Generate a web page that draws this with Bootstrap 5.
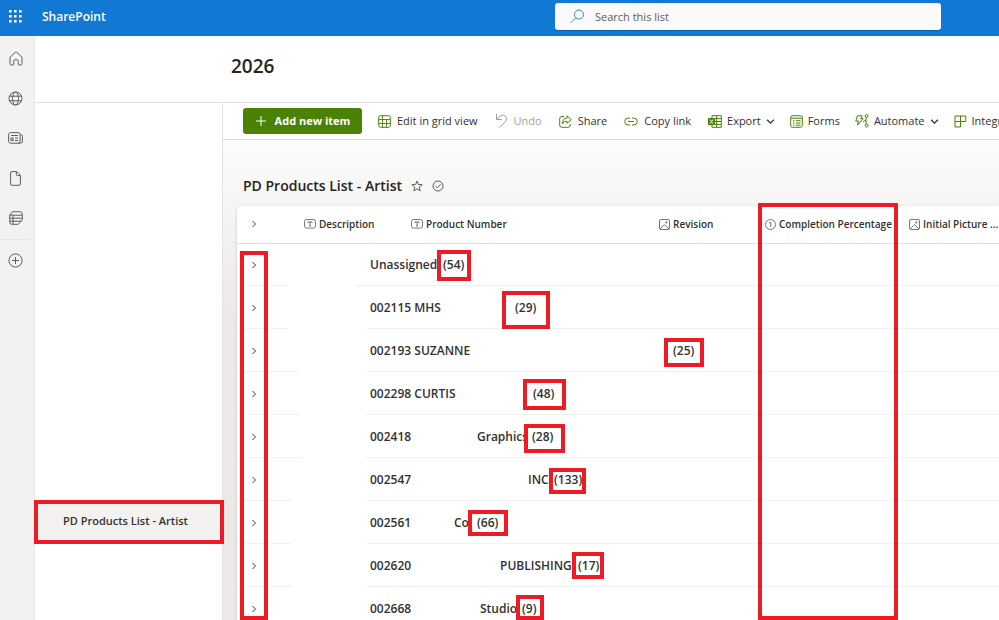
<!DOCTYPE html>
<html lang="en">
<head>
<meta charset="utf-8">
<meta name="viewport" content="width=device-width, initial-scale=1">
<title>PD Products List - Artist</title>
<link href="https://cdn.jsdelivr.net/npm/bootstrap@5.3.0/dist/css/bootstrap.min.css" rel="stylesheet">
<style>
  body { font-family: "Open Sans", "Noto Sans", sans-serif; font-size: 12px; line-height: 16px; color: #323130; background: #fff; }
  svg { fill: none; stroke: currentColor; display: block; flex: none; }
  button { color: inherit; }
  .suite-bar { height: 36px; padding-bottom: 3px; background: #1178d4; }
  .suite-bar .launcher { width: 31px; color: #fff; }
  .suite-bar .launcher svg { fill: #fff; stroke: none; }
  .brand-link { font-size: 12px; font-weight: 600; margin-left: 11px; }
  .search-box { flex: 0 1 386px; height: 27px; margin-right: 58px; background: #fafafa; border-radius: 3px; padding-left: 15px; gap: 10px; color: #3b82c4; box-shadow: 0 1px 1px #0a5ea8; }
  .search-box input { font-size: 11px; color: #605e5c; outline: 0; }
  .search-box input::placeholder { color: #605e5c; }
  .app-rail { flex: 0 0 35px; padding-top: 2px; background: #f3f2f1; color: #605e5c; border-right: 1px solid #eae8e6; }
  .app-rail a { height: 40px; width: 31px; }
  .app-rail .rail-split { border-top: 1px solid #e9e7e5; width: 31px; margin-top: 1px; }
  .site-title { height: 67px; padding: 0 0 6px 196px; border-bottom: 1px solid #e3e1df; }
  .site-title h1 { font-size: 19px; font-weight: 600; line-height: 24px; color: #252423; }
  .site-nav { flex: 0 0 188px; border-right: 1px solid #e6e4e2; padding-top: 399px; }
  .site-nav a { height: 37px; padding-left: 28px; background: #f3f2f1; font-size: 11px; font-weight: 600; }
  .command-bar { height: 37px; padding-left: 20px; gap: 17px; border-bottom: 1px solid #dddbd9; font-size: 11px; }
  .command-bar button { gap: 6px; white-space: nowrap; flex: none; }
  .command-bar .more-commands { gap: 15px; }
  .command-bar .more-commands button { gap: 5px; }
  .command-bar svg { color: #498205; }
  .command-bar .btn-add { height: 26px; width: 119px; gap: 8px; margin-right: -1px; background: #498205; border-radius: 3px; font-weight: 700; }
  .command-bar .btn-add svg, .command-bar .btn-add { color: #fff; }
  .command-bar .caret { color: #323130; stroke-width: 1.4; }
  .command-bar button:disabled, .command-bar button:disabled svg { color: #a19f9d; }
  .list-area { background: linear-gradient(#fcfcfb, #f6f5f4 66px, #eae9e8 180px); }
  .list-head { height: 66px; padding: 36px 0 0 20px; gap: 9px; color: #605e5c; }
  .list-head h2 { font-size: 14px; font-weight: 600; line-height: 20px; color: #252423; }
  .list-card { margin-left: 14px; background: #fff; border-radius: 6px 0 0 0; box-shadow: 0 1px 3px #c4c2c0; }
  .list-card table { table-layout: fixed; width: 100%; min-width: 762px; border-collapse: collapse; }
  .list-card th { height: 37px; padding: 0 0 0 10px; font-size: 10px; font-weight: 600; white-space: nowrap; border-bottom: 1px solid #e1dfdd; }
  .list-card th span { gap: 3px; }
  .list-card th svg { color: #797775; }
  .list-card .expander svg { color: #3b3a39; }
  .list-card td { height: 43px; padding: 0; font-size: 12px; font-weight: 600; }
  .list-card .expander { width: 34px; height: 24px; }
  .col-expand { width: 57px; } .col-desc { width: 107px; } .col-number { width: 248px; }
  .col-rev { width: 106px; } .col-done { width: 144px; }
  .group-row { --from: 55px; --to: 130px; background: linear-gradient(90deg, #f2f1f0 var(--from), #fff var(--from) var(--to), #f2f1f0 var(--to)) bottom / 100% 1px no-repeat; }
  .group-row td:last-child { padding-left: 76px; }
  .group-name { flex: 0 0 var(--name); }
  .group-word { flex: 0 0 var(--word); }
  .g1 { --name: 73px; --from: 51px; --to: 119px; }
  .g2 { --name: 145px; --from: 51px; }
  .g3 { --name: 303px; --from: 61px; }
  .g4 { --name: 163px; --from: 63px; }
  .g5 { --name: 107px; --word: 55px; --from: 65px; }
  .g6 { --name: 158px; --word: 26px; }
  .g7 { --name: 84px; --word: 23px; }
  .g8 { --name: 130px; --word: 78px; }
  .g9 { --name: 110px; --word: 42px; }
  /* review highlights drawn over the page */
  .hl { position: absolute; border: 4px solid #ed1c24; pointer-events: none; }
  .hl-nav { left: 34px; top: 500px; width: 190px; height: 44px; }
  .hl-expand { left: 240px; top: 251px; width: 28px; height: 369px; }
  .hl-done { left: 758px; top: 203px; width: 140px; height: 417px; }
  .hl-1 { left: 437px; top: 250px; width: 34px; height: 31px; }
  .hl-2 { left: 502px; top: 291px; width: 48px; height: 38px; }
  .hl-3 { left: 664px; top: 338px; width: 40px; height: 29px; }
  .hl-4 { left: 523px; top: 379px; width: 43px; height: 31px; }
  .hl-5 { left: 524px; top: 424px; width: 41px; height: 29px; }
  .hl-6 { left: 549px; top: 468px; width: 37px; height: 26px; }
  .hl-7 { left: 468px; top: 510px; width: 40px; height: 26px; }
  .hl-8 { left: 572px; top: 552px; width: 32px; height: 27px; }
  .hl-9 { left: 516px; top: 595px; width: 28px; height: 25px; }
</style>
</head>
<body class="vh-100 overflow-hidden d-flex flex-column position-relative">
<svg class="d-none" aria-hidden="true">
  <symbol id="chev-r" viewBox="0 0 8 8"><path d="M2.500 1l3 3-3 3"/></symbol>
  <symbol id="chev-d" viewBox="0 0 10 10"><path d="M1.200 3l3.800 3.800L8.800 3"/></symbol>
  <symbol id="ic-text" viewBox="0 0 12 10"><rect x=".5" y=".5" width="11" height="8.600" rx="2"/><path d="M4 4V3h4v1M6 3v4M5 7h2"/></symbol>
  <symbol id="ic-image" viewBox="0 0 11 11"><rect x=".5" y=".5" width="10" height="10" rx="1.500"/><path d="M1 10l3.600-3.800q.9-.9 1.800 0L10 10"/><circle cx="7.400" cy="3.400" r=".8"/></symbol>
</svg>

<header class="suite-bar d-flex align-items-center flex-shrink-0">
  <button type="button" class="launcher btn p-0 border-0 d-flex justify-content-center" aria-label="App launcher">
    <svg width="13" height="13" viewBox="0 0 13 13"><path d="M0 0h2.600v2.600H0zM5 0h2.600v2.600H5zM10 0h2.600v2.600H10zM0 5h2.600v2.600H0zM5 5h2.600v2.600H5zM10 5h2.600v2.600H10zM0 10h2.600v2.600H0zM5 10h2.600v2.600H5zM10 10h2.600v2.600H10z"/></svg>
  </button>
  <a href="#" class="brand-link text-white text-decoration-none me-auto">SharePoint</a>
  <div class="search-box d-flex align-items-center">
    <svg width="15" height="15" viewBox="0 0 15 15"><circle cx="9" cy="5.500" r="4.500"/><path d="M5.800 8.800L.8 13.800"/></svg>
    <input type="text" class="border-0 bg-transparent p-0 flex-grow-1" placeholder="Search this list" aria-label="Search this list">
  </div>
</header>

<div class="d-flex flex-grow-1 overflow-hidden">
  <nav class="app-rail" aria-label="App bar">
    <a href="#" class="d-flex align-items-center justify-content-center text-reset" aria-label="Home"><svg width="14" height="15" viewBox="0 0 14 15"><path d="M1 6.200L6.200 1.300q.8-.6 1.600 0L13 6.200v6.600q0 1.200-1.200 1.200h-1.600q-1 0-1-1V10q0-1.400-2.200-1.400T4.800 10v3q0 1-1 1H2.200q-1.200 0-1.200-1.200z"/></svg></a>
    <a href="#" class="d-flex align-items-center justify-content-center text-reset" aria-label="My sites"><svg width="15" height="15" viewBox="0 0 15 15"><circle cx="7.500" cy="7.500" r="6.500"/><ellipse cx="7.500" cy="7.500" rx="3" ry="6.500"/><path d="M1.500 5.200h12M1.500 9.800h12"/></svg></a>
    <a href="#" class="d-flex align-items-center justify-content-center text-reset" aria-label="News"><svg width="15" height="12" viewBox="0 0 15 12"><rect x=".6" y=".6" width="11.500" height="10.600" rx="2"/><path d="M12.200 2.600q2.200 0 2.200 1.600v5q0 2-2.200 2H10M3 3.500h7M7 6h3M7 8.500h3"/><rect x="3" y="6" width="2" height="2.500"/></svg></a>
    <a href="#" class="d-flex align-items-center justify-content-center text-reset" aria-label="My files"><svg width="11" height="15" viewBox="0 0 11 15"><path d="M2 .6h4.800l3.600 3.800V13q0 1.300-1.300 1.300H2Q.6 14.300.6 13V2Q.6.6 2 .6zM6.400.8v2.800q0 1 1 1h2.900"/></svg></a>
    <a href="#" class="d-flex align-items-center justify-content-center text-reset" aria-label="My lists"><svg width="14" height="14" viewBox="0 0 14 14"><path d="M3.500.7h7.300q2.500 0 2.500 2.500v5.500l-4 4.600H3q-2.300 0-2.300-2.300V4.200zM.7 4.200h12.600M.7 7.200h12.600M.7 10.200h11.600M4 4.200v9"/></svg></a>
    <div class="rail-split"></div>
    <a href="#" class="d-flex align-items-center justify-content-center text-reset" aria-label="Create"><svg width="15" height="15" viewBox="0 0 15 15"><circle cx="7.500" cy="7.500" r="6.600"/><path d="M7.500 4v7M4 7.500h7"/></svg></a>
  </nav>

  <div class="d-flex flex-column flex-grow-1 overflow-hidden">
    <div class="site-title d-flex align-items-center flex-shrink-0"><h1 class="m-0">2026</h1></div>
    <div class="d-flex flex-grow-1 overflow-hidden">
      <nav class="site-nav" aria-label="Site">
        <a href="#" class="d-flex align-items-center text-reset text-decoration-none">PD Products List - Artist</a>
      </nav>
      <main class="d-flex flex-column flex-grow-1 overflow-hidden">
        <div class="command-bar d-flex align-items-center flex-shrink-0 overflow-hidden">
          <button type="button" class="btn-add border-0 p-0 d-flex align-items-center justify-content-center"><svg width="12" height="12" viewBox="0 0 12 12"><path d="M6 1v10M1 6h10"/></svg>Add new item</button>
          <button type="button" class="border-0 bg-transparent p-0 d-flex align-items-center"><svg width="13" height="13" viewBox="0 0 13 13"><rect x=".7" y=".7" width="11.600" height="11.600" rx="1.800"/><path d="M.7 4.500h11.600M.7 8.500h11.600M4.500.7v11.600M8.500 4.500v8" stroke-width=".9"/></svg>Edit in grid view</button>
          <button type="button" disabled class="border-0 bg-transparent p-0 d-flex align-items-center"><svg width="13" height="14" viewBox="0 0 13 14"><path d="M1.500 0v5.500H7M1.700 5.200L5 2.200q3-2.400 5.600 0 2.400 2.600 0 5.300L4.500 13.500"/></svg>Undo</button>
          <button type="button" class="border-0 bg-transparent p-0 d-flex align-items-center"><svg width="13" height="13" viewBox="0 0 13 13"><path d="M5 1.500H3Q.7 1.500.7 3.800v6.200q0 2.300 2.300 2.300h6q2.300 0 2.300-2.300V9M8 .8l4.300 3.800L8 8.300V6.300Q5 6 3.300 8.700 3.500 3.500 8 3z"/></svg>Share</button>
          <button type="button" class="border-0 bg-transparent p-0 d-flex align-items-center"><svg width="14" height="9" viewBox="0 0 14 9"><path d="M6 1H4.200Q.7 1 .7 4.500T4.200 8H6M8 1h1.800q3.500 0 3.500 3.500T9.800 8H8M4 4.500h6"/></svg>Copy link</button>
          <div class="more-commands d-flex align-items-center flex-shrink-0">
            <button type="button" class="border-0 bg-transparent p-0 d-flex align-items-center"><svg width="14" height="13" viewBox="0 0 14 13"><path d="M4 3V.7h9.300v11.600H4V10M4 3.600h9.300M7 6.500h6.300M4 9.400h9.300M8.700.7v11.600"/><path fill="#498205" stroke="none" d="M0 3h7v7H0z"/><path stroke="#fff" d="M2 4.600l3 4M5 4.600l-3 4"/></svg>Export<svg class="caret" width="9" height="9"><use href="#chev-d"/></svg></button>
            <button type="button" class="border-0 bg-transparent p-0 d-flex align-items-center"><svg width="13" height="13" viewBox="0 0 13 13"><rect x=".7" y=".7" width="11.600" height="11.600" rx="1.800"/><path d="M.7 3.200h11.600M3 5.700h1.500M3 8h1.500M3 10.200h1.500M6 5.700h4.500M6 8h4.500M6 10.200h4.500"/></svg>Forms</button>
            <button type="button" class="border-0 bg-transparent p-0 d-flex align-items-center"><svg width="14" height="14" viewBox="0 0 14 14"><path d="M2.500 1.800h4.700L5.800 4.700h2.400L2.500 11l1-4H.8zM11 3.400v6.800M11 7q-2-1-3 1"/><circle cx="11.600" cy="2" r="1.400"/><circle cx="11.600" cy="11.600" r="1.500"/></svg>Automate<svg class="caret" width="9" height="9"><use href="#chev-d"/></svg></button>
            <button type="button" class="border-0 bg-transparent p-0 d-flex align-items-center"><svg width="13" height="13" viewBox="0 0 13 13"><path d="M1 1h10.800v5.500H6.500V12H1zM6.500 1v5.500H1"/></svg>Integrate</button>
          </div>
        </div>
        <div class="list-area flex-grow-1">
          <div class="list-head d-flex align-items-start">
            <h2 class="m-0">PD Products List - Artist</h2>
            <button type="button" class="border-0 bg-transparent p-0 mt-1" aria-label="Favorite"><svg width="12" height="12" viewBox="0 0 12 12"><path d="M6 1l1.400 3.500 3.800.2-3 2.400 1 3.800L6 8.800l-3.200 2.100 1-3.800-3-2.400 3.800-.2z"/></svg></button>
            <button type="button" class="border-0 bg-transparent p-0 mt-1" aria-label="List status"><svg width="12" height="12" viewBox="0 0 12 12"><circle cx="6" cy="6" r="5"/><path d="M3.500 6.200l1.800 1.600L8.700 4.400"/></svg></button>
          </div>
          <div class="list-card overflow-hidden">
            <table>
              <colgroup><col class="col-expand"><col class="col-desc"><col class="col-number"><col class="col-rev"><col class="col-done"><col></colgroup>
              <thead>
                <tr>
                  <th class="ps-0"><button type="button" class="expander border-0 bg-transparent p-0 d-flex align-items-center justify-content-center" aria-label="Expand all"><svg width="8" height="8"><use href="#chev-r"/></svg></button></th>
                  <th><span class="d-flex align-items-center"><svg width="12" height="10"><use href="#ic-text"/></svg>Description</span></th>
                  <th><span class="d-flex align-items-center"><svg width="12" height="10"><use href="#ic-text"/></svg>Product Number</span></th>
                  <th><span class="d-flex align-items-center"><svg width="11" height="11"><use href="#ic-image"/></svg>Revision</span></th>
                  <th><span class="d-flex align-items-center"><svg width="11" height="11" viewBox="0 0 11 11"><circle cx="5.500" cy="5.500" r="5"/><path d="M4.200 4l1.500-1v5"/></svg>Completion Percentage</span></th>
                  <th><span class="d-flex align-items-center"><svg width="11" height="11"><use href="#ic-image"/></svg>Initial Picture ...</span></th>
                </tr>
              </thead>
              <tbody>
                <tr class="group-row g1"><td><button type="button" class="expander border-0 bg-transparent p-0 d-flex align-items-center justify-content-center" aria-label="Expand"><svg width="8" height="8"><use href="#chev-r"/></svg></button></td><td colspan="5"><div class="d-flex"><span class="group-name">Unassigned</span><span>(54)</span></div></td></tr>
                <tr class="group-row g2"><td><button type="button" class="expander border-0 bg-transparent p-0 d-flex align-items-center justify-content-center" aria-label="Expand"><svg width="8" height="8"><use href="#chev-r"/></svg></button></td><td colspan="5"><div class="d-flex"><span class="group-name">002115 MHS</span><span>(29)</span></div></td></tr>
                <tr class="group-row g3"><td><button type="button" class="expander border-0 bg-transparent p-0 d-flex align-items-center justify-content-center" aria-label="Expand"><svg width="8" height="8"><use href="#chev-r"/></svg></button></td><td colspan="5"><div class="d-flex"><span class="group-name">002193 SUZANNE</span><span>(25)</span></div></td></tr>
                <tr class="group-row g4"><td><button type="button" class="expander border-0 bg-transparent p-0 d-flex align-items-center justify-content-center" aria-label="Expand"><svg width="8" height="8"><use href="#chev-r"/></svg></button></td><td colspan="5"><div class="d-flex"><span class="group-name">002298 CURTIS</span><span>(48)</span></div></td></tr>
                <tr class="group-row g5"><td><button type="button" class="expander border-0 bg-transparent p-0 d-flex align-items-center justify-content-center" aria-label="Expand"><svg width="8" height="8"><use href="#chev-r"/></svg></button></td><td colspan="5"><div class="d-flex"><span class="group-name">002418</span><span class="group-word">Graphics</span><span>(28)</span></div></td></tr>
                <tr class="group-row g6"><td><button type="button" class="expander border-0 bg-transparent p-0 d-flex align-items-center justify-content-center" aria-label="Expand"><svg width="8" height="8"><use href="#chev-r"/></svg></button></td><td colspan="5"><div class="d-flex"><span class="group-name">002547</span><span class="group-word">INC</span><span>(133)</span></div></td></tr>
                <tr class="group-row g7"><td><button type="button" class="expander border-0 bg-transparent p-0 d-flex align-items-center justify-content-center" aria-label="Expand"><svg width="8" height="8"><use href="#chev-r"/></svg></button></td><td colspan="5"><div class="d-flex"><span class="group-name">002561</span><span class="group-word">Co.</span><span>(66)</span></div></td></tr>
                <tr class="group-row g8"><td><button type="button" class="expander border-0 bg-transparent p-0 d-flex align-items-center justify-content-center" aria-label="Expand"><svg width="8" height="8"><use href="#chev-r"/></svg></button></td><td colspan="5"><div class="d-flex"><span class="group-name">002620</span><span class="group-word">PUBLISHING</span><span>(17)</span></div></td></tr>
                <tr class="group-row g9"><td><button type="button" class="expander border-0 bg-transparent p-0 d-flex align-items-center justify-content-center" aria-label="Expand"><svg width="8" height="8"><use href="#chev-r"/></svg></button></td><td colspan="5"><div class="d-flex"><span class="group-name">002668</span><span class="group-word">Studio</span><span>(9)</span></div></td></tr>
              </tbody>
            </table>
          </div>
        </div>
      </main>
    </div>
  </div>
</div>

<div class="hl hl-nav"></div><div class="hl hl-expand"></div><div class="hl hl-done"></div>
<div class="hl hl-1"></div><div class="hl hl-2"></div><div class="hl hl-3"></div>
<div class="hl hl-4"></div><div class="hl hl-5"></div><div class="hl hl-6"></div>
<div class="hl hl-7"></div><div class="hl hl-8"></div><div class="hl hl-9"></div>
<script src="https://cdn.jsdelivr.net/npm/bootstrap@5.3.0/dist/js/bootstrap.bundle.min.js"></script>
</body>
</html>
